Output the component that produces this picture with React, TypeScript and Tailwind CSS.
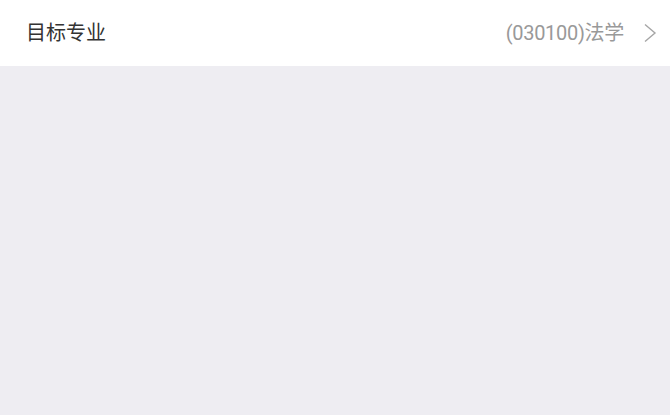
export default function App() {
  return (
    <div
      className="flex h-[415px] w-[670px] flex-col bg-[#eeedf2]"
      style={{ fontFamily: '"Roboto", "Noto Sans CJK SC", sans-serif' }}
    >
      <div className="flex h-[66px] items-center justify-between bg-white pl-[26px] pr-[13px]">
        <span className="text-[20px] text-[#333333]">目标专业</span>
        <div className="flex items-center gap-[19px]">
          <span className="text-[20px] tracking-[-0.3px] text-[#999999]">(030100)法学</span>
          <svg width="14" height="20" viewBox="0 0 14 20" fill="none">
            <path d="M2 1.5l10 8.5-10 8.5" stroke="#a6a6a6" strokeWidth="1.4" />
          </svg>
        </div>
      </div>
    </div>
  );
}
